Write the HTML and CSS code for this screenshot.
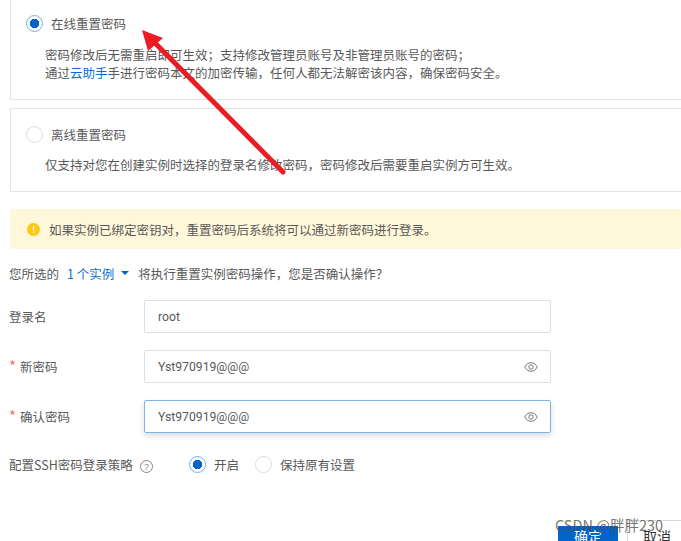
FILE: index.html
```html
<!DOCTYPE html>
<html lang="zh">
<head>
<meta charset="utf-8">
<title>重置实例密码</title>
<link rel="stylesheet" href="styles.css">
</head>
<body>
<main class="page">
  <section class="card card-first">
    <div class="option"><span class="radio on"></span><span>在线重置密码</span></div>
    <p class="desc">密码修改后无需重启即可生效；支持修改管理员账号及非管理员账号的密码；<br>通过<a class="link">云助手</a>手进行密码本文的加密传输，任何人都无法解密该内容，确保密码安全。</p>
  </section>
  <section class="card card-second">
    <div class="option"><span class="radio"></span><span>离线重置密码</span></div>
    <p class="desc">仅支持对您在创建实例时选择的登录名修改密码，密码修改后需要重启实例方可生效。</p>
  </section>
  <div class="alert">
    <svg class="alert-icon" width="13" height="13" viewBox="0 0 13 13"><circle cx="6.5" cy="6.5" r="6.5" fill="#fcc913"/><rect x="5.9" y="3" width="1.2" height="4.4" fill="#fff"/><rect x="5.9" y="8.6" width="1.2" height="1.3" fill="#fff"/></svg>
    <span>如果实例已绑定密钥对，重置密码后系统将可以通过新密码进行登录。</span>
  </div>
  <div class="selected">
    <span>您所选的</span>
    <a class="link instances">1 个实例<svg class="caret" width="8" height="4" viewBox="0 0 8 4"><path d="M0 0h8L4 4z" fill="#0064c8"/></svg></a>
    <span>将执行重置实例密码操作，您是否确认操作？</span>
  </div>
  <form class="form">
    <div class="row">
      <label class="label">登录名</label>
      <div class="input"><span>root</span></div>
    </div>
    <div class="row">
      <label class="label"><span class="req">*</span>新密码</label>
      <div class="input"><span>Yst970919@@@</span>
        <svg class="eye" width="14" height="10" viewBox="0 0 14 10"><path d="M.7 5C2.2 2.2 4.4.7 7 .7s4.8 1.5 6.3 4.3C11.8 7.8 9.6 9.3 7 9.3S2.2 7.8.7 5z" fill="none" stroke="#777"/><circle cx="7" cy="5" r="2.2" fill="none" stroke="#777"/></svg>
      </div>
    </div>
    <div class="row">
      <label class="label"><span class="req">*</span>确认密码</label>
      <div class="input focus"><span>Yst970919@@@</span>
        <svg class="eye" width="14" height="10" viewBox="0 0 14 10"><path d="M.7 5C2.2 2.2 4.4.7 7 .7s4.8 1.5 6.3 4.3C11.8 7.8 9.6 9.3 7 9.3S2.2 7.8.7 5z" fill="none" stroke="#777"/><circle cx="7" cy="5" r="2.2" fill="none" stroke="#777"/></svg>
      </div>
    </div>
    <div class="row-ssh">
      <span class="ssh-label">配置SSH密码登录策略</span>
      <svg class="help" width="13" height="13" viewBox="0 0 13 13"><circle cx="6.5" cy="6.5" r="6" fill="none" stroke="#888"/><text x="6.5" y="9.8" text-anchor="middle" font-size="9" font-family="Liberation Sans" fill="#888">?</text></svg>
      <span class="radio on"></span><span class="ssh-opt">开启</span>
      <span class="radio"></span><span>保持原有设置</span>
    </div>
  </form>
  <div class="actions">
    <button type="button" class="btn primary">确定</button>
    <button type="button" class="btn">取消</button>
  </div>
</main>
<svg class="arrow" width="681" height="541" viewBox="0 0 681 541"><path d="M283 172L155 43" stroke="#ea1c24" stroke-width="5" stroke-linecap="round" fill="none"/><path d="M142 30L163 38L148 51z" fill="#ea1c24"/></svg>
<div class="watermark">CSDN @胖胖230</div>
</body>
</html>
```
FILE: styles.css
```css
* { box-sizing: border-box; }
html, body { margin: 0; padding: 0; height: 541px; overflow: hidden; background: #fff; }
body {
  font-family: "Noto Sans CJK SC", "Liberation Sans", sans-serif;
  font-size: 12.5px;
  color: #595959;
  position: relative;
}
.page { padding-left: 10px; width: 681px; }
.card { border: 1px solid #e3e3e3; border-right: none; padding-left: 34px; }
.card-first { height: 100px; border-top: none; padding-top: 14px; }
.card-second { height: 84px; margin-top: 8px; padding-top: 16px; }
.card-second .desc { margin-top: 13px; }
.option { display: flex; align-items: center; gap: 8px; margin-left: -19px; height: 18px; }
.radio {
  width: 17px; height: 17px; border-radius: 50%; border: 1px solid #dcdcdc;
  background: #fff; flex: none; display: inline-block;
}
.radio.on {
  border-color: #79b0ea;
  background: radial-gradient(circle, #0064c8 0 4.5px, #fff 5px);
}
.desc { margin: 14px 0 0; line-height: 18px; }
.link { color: #0a6fd0; }
.alert {
  margin-top: 17px; height: 40px; background: #fff7d9;
  display: flex; align-items: center; padding-left: 17px; gap: 9px; border-radius: 2px;
}
.alert-icon { flex: none; }
.selected { margin: 15px 0 0 -1px; height: 18px; display: flex; align-items: center; gap: 8px; }
.instances { display: inline-flex; align-items: center; gap: 7px; margin-right: 1px; }
.form { margin: 18px 0 0 -1px; }
.row { display: flex; align-items: center; height: 33px; margin-bottom: 17px; }
.label { width: 135px; flex: none; }
.req { color: #f0737c; font-size: 15px; line-height: 1; margin-right: 4px; }
.input {
  width: 407px; height: 33px; border: 1px solid #dedede; border-radius: 2px;
  display: flex; align-items: center; justify-content: space-between;
  padding: 0 12px 0 13px; font-family: "Roboto", "Liberation Sans", sans-serif; font-size: 12.2px;
}
.input.focus { border: 1.5px solid #7fb2e8; box-shadow: 0 3px 6px rgba(0,0,0,.14); }
.row-ssh { display: flex; align-items: center; margin-top: 23px; height: 17px; }
.ssh-label { width: 131px; flex: none; }
.help { margin: 3px 36px 0 0; flex: none; }
.row-ssh .radio { margin-right: 8px; }
.ssh-opt { margin-right: 16px; }
.actions { margin: 47px 0 0 548px; display: flex; align-items: flex-start; gap: 9px; }
.btn {
  width: 60px; height: 32px; padding: 0; border: 1px solid #d8d8d8; background: #fff; color: #333;
  font: 14px/28px "Noto Sans CJK SC", sans-serif; display: block; flex: none;
}
.btn.primary { background: #0064c8; border-color: #0064c8; color: #fff; margin-top: 6px; height: 26px; padding-bottom: 6px; line-height: 18px; }
.arrow { position: absolute; left: 0; top: 0; pointer-events: none; }
.watermark {
  position: absolute; left: 555px; top: 514px; font: 14.5px/22px "Noto Sans CJK SC", "Liberation Sans", sans-serif;
  color: rgba(80,80,80,.8);
}
```
